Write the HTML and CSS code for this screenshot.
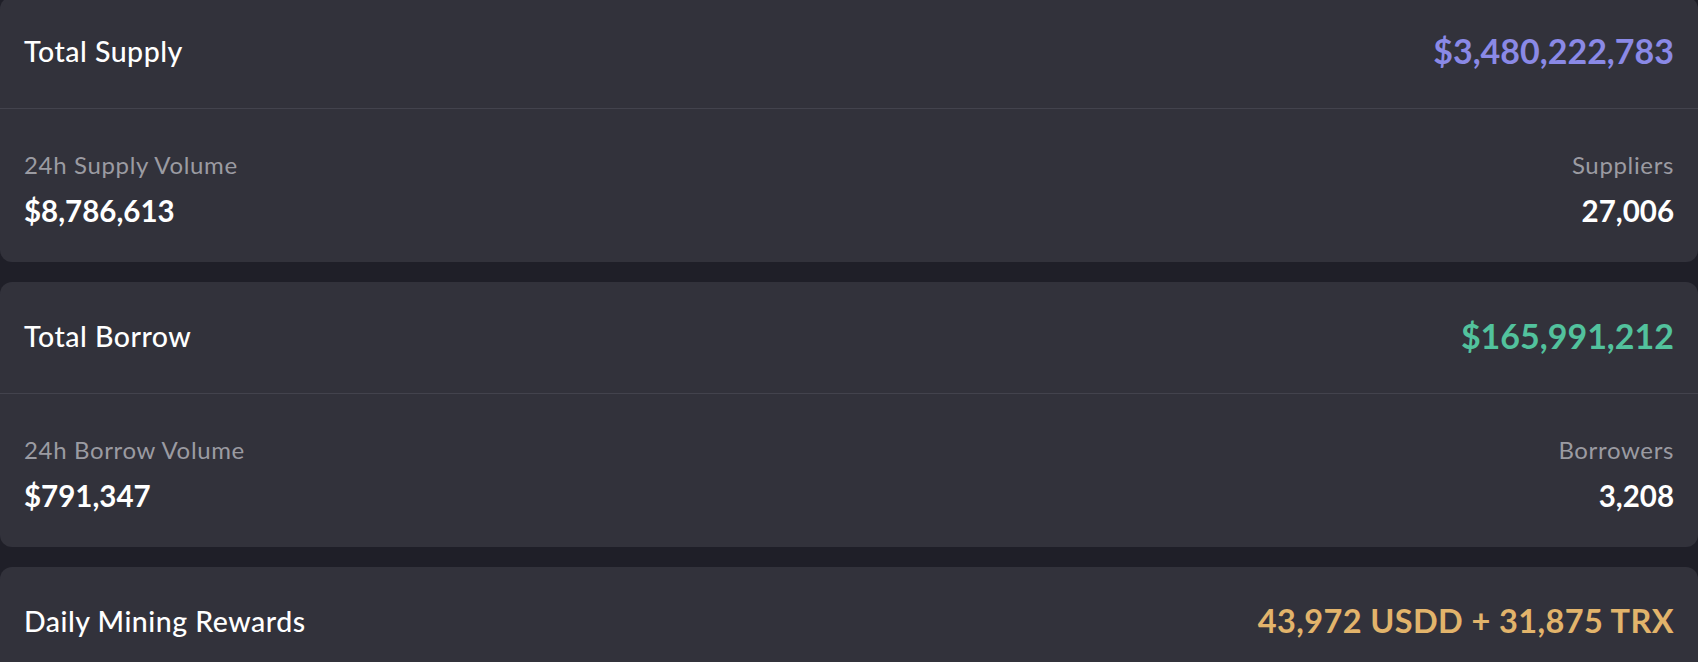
FILE: index.html
```html
<!DOCTYPE html>
<html lang="en">
<head>
<meta charset="utf-8">
<title>Market Overview</title>
<link rel="stylesheet" href="styles.css">
</head>
<body>
<main class="page">
  <section class="card">
    <div class="card-head">
      <span class="title">Total Supply</span>
      <span class="amount amount-supply">$3,480,222,783</span>
    </div>
    <div class="card-body">
      <div class="stat">
        <div class="label">24h Supply Volume</div>
        <div class="value">$8,786,613</div>
      </div>
      <div class="stat stat-right">
        <div class="label">Suppliers</div>
        <div class="value">27,006</div>
      </div>
    </div>
  </section>

  <section class="card">
    <div class="card-head">
      <span class="title">Total Borrow</span>
      <span class="amount amount-borrow">$165,991,212</span>
    </div>
    <div class="card-body">
      <div class="stat">
        <div class="label">24h Borrow Volume</div>
        <div class="value">$791,347</div>
      </div>
      <div class="stat stat-right">
        <div class="label">Borrowers</div>
        <div class="value">3,208</div>
      </div>
    </div>
  </section>

  <section class="card">
    <div class="card-head">
      <span class="title">Daily Mining Rewards</span>
      <span class="amount amount-reward">43,972 USDD + 31,875 TRX</span>
    </div>
  </section>
</main>
</body>
</html>
```

FILE: styles.css
```css
* {
  box-sizing: border-box;
}

html, body {
  margin: 0;
  padding: 0;
  background: #1f1f28;
  overflow: hidden;
}

body {
  font-family: Lato, "Open Sans", sans-serif;
  color: #ffffff;
}

.page {
  display: flex;
  flex-direction: column;
  gap: 20px;
  margin-top: -3px;
}

.card {
  background: #32323b;
  border-radius: 12px;
}

.card-head {
  height: 111px;
  display: flex;
  align-items: center;
  justify-content: space-between;
  padding: 0 24px 4px 24px;
}

.card-body {
  border-top: 1px solid #43434d;
  height: 154px;
  display: flex;
  justify-content: space-between;
  padding: 42px 24px 0 24px;
}

.title {
  font-size: 28.5px;
  line-height: 34px;
  font-weight: 500;
  letter-spacing: 0.5px;
}

.amount {
  font-size: 34px;
  line-height: 40px;
  font-weight: 700;
}

.amount-supply {
  color: #8a89e6;
}

.amount-borrow {
  color: #52c29d;
}

.amount-reward {
  color: #e2b46b;
  font-size: 32.5px;
  letter-spacing: 0.4px;
}

.stat {
  display: flex;
  flex-direction: column;
  gap: 15px;
}

.stat-right {
  align-items: flex-end;
}

.label {
  font-size: 24px;
  line-height: 28px;
  letter-spacing: 0.65px;
  color: #9b9ba2;
}

.value {
  font-size: 29.5px;
  line-height: 34px;
  font-weight: 700;
}
```
